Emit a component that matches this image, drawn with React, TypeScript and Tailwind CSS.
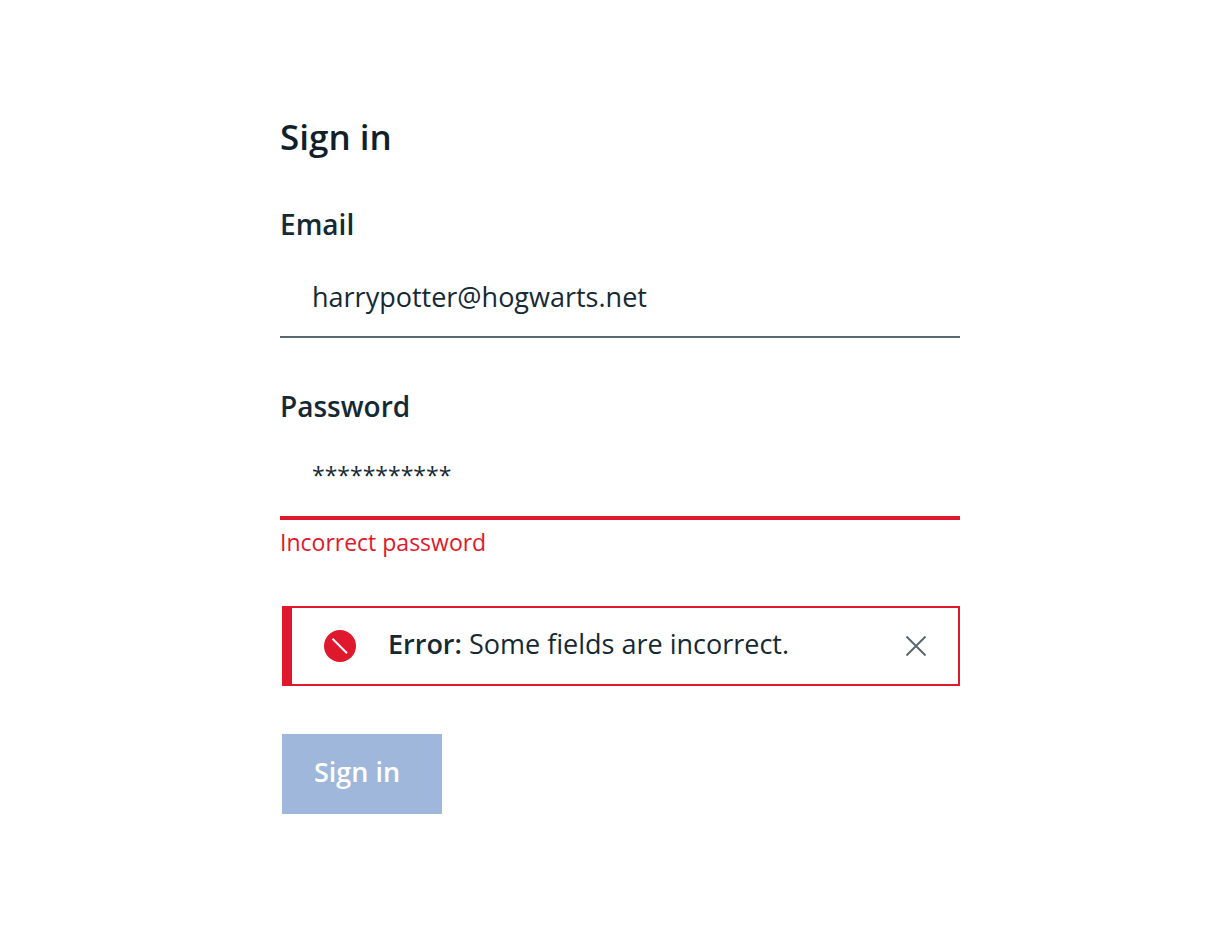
import React, { useState } from "react";

export default function App() {
  const [email, setEmail] = useState("harrypotter@hogwarts.net");
  const [password, setPassword] = useState("***********");
  const [showError, setShowError] = useState(true);

  return (
    <main className="min-h-screen bg-white pt-28 pr-6 pb-28 pl-14 font-['Open_Sans','Noto_Sans',sans-serif] text-[#152935]">
      <form className="mx-auto flex w-full max-w-[680px] flex-col" onSubmit={(e) => e.preventDefault()}>
        <h1 className="pt-0.5 text-[35px] leading-[46px] font-semibold text-[#121f2b]">Sign in</h1>
        <label htmlFor="email" className="mt-12 text-[28px] leading-8 font-semibold">Email</label>
        <input
          id="email"
          type="text"
          value={email}
          onChange={(e) => setEmail(e.target.value)}
          className="mt-4 h-[82px] w-full border-b-2 border-[#5a6872] px-8 text-[27px] outline-none"
        />
        <label htmlFor="password" className="mt-[52px] text-[28px] leading-8 font-semibold">Password</label>
        <input
          id="password"
          type="text"
          value={password}
          onChange={(e) => setPassword(e.target.value)}
          aria-invalid="true"
          aria-describedby="password-error"
          className="mt-4 h-[82px] w-full border-b-4 border-[#e0182d] px-8 pb-1 text-[23px] outline-none"
        />
        <p id="password-error" className="mt-1.5 text-[23px] leading-8 text-[#e0182d]">Incorrect password</p>
        {showError && (
          <div role="alert" className="mt-12 ml-0.5 flex h-20 items-center border-2 border-l-[10px] border-[#e0182d] px-8">
            <svg viewBox="0 0 32 32" className="size-8 shrink-0" aria-hidden="true">
              <circle cx="16" cy="16" r="16" fill="#e0182d" />
              <path d="M8.5 8.8 23 23.2" stroke="#fff" strokeWidth="2" />
            </svg>
            <p className="ml-8 flex-1 pb-1 text-[27px] leading-9"><strong className="font-semibold">Error:</strong> Some fields are incorrect.</p>
            <button type="button" aria-label="Dismiss" onClick={() => setShowError(false)}>
              <svg viewBox="0 0 20 20" className="size-5" aria-hidden="true">
                <path d="M.5.5l19 19M19.5.5l-19 19" stroke="#5a6872" strokeWidth="2" />
              </svg>
            </button>
          </div>
        )}
        <button type="submit" className="mt-12 ml-0.5 h-20 w-40 bg-[#9eb7da] px-8 pb-1 text-left text-[27px] font-semibold text-white">Sign in</button>
      </form>
    </main>
  );
}
